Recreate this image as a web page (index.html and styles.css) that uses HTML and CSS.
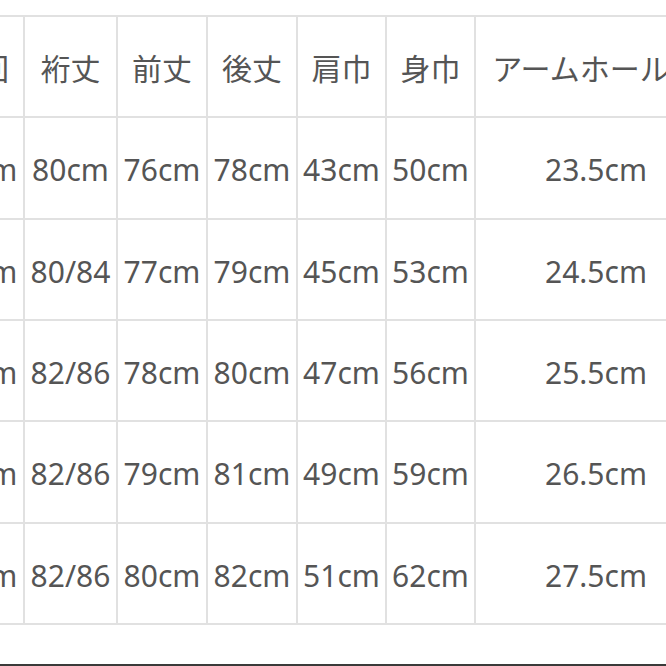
FILE: index.html
```html
<!DOCTYPE html>
<html lang="ja">
<head>
<meta charset="utf-8">
<title>サイズ表</title>
<link rel="stylesheet" href="styles.css">
</head>
<body>
<div class="page">
  <table class="size-table">
    <colgroup>
      <col class="c-chest">
      <col class="c-sleeve">
      <col class="c-front">
      <col class="c-back">
      <col class="c-shoulder">
      <col class="c-body">
      <col class="c-arm">
    </colgroup>
    <thead>
      <tr>
        <th>胸回</th>
        <th>裄丈</th>
        <th>前丈</th>
        <th>後丈</th>
        <th>肩巾</th>
        <th>身巾</th>
        <th>アームホール周</th>
      </tr>
    </thead>
    <tbody>
      <tr><td>90cm</td><td>80cm</td><td>76cm</td><td>78cm</td><td>43cm</td><td>50cm</td><td>23.5cm</td></tr>
      <tr><td>94cm</td><td>80/84</td><td>77cm</td><td>79cm</td><td>45cm</td><td>53cm</td><td>24.5cm</td></tr>
      <tr><td>98cm</td><td>82/86</td><td>78cm</td><td>80cm</td><td>47cm</td><td>56cm</td><td>25.5cm</td></tr>
      <tr><td>92cm</td><td>82/86</td><td>79cm</td><td>81cm</td><td>49cm</td><td>59cm</td><td>26.5cm</td></tr>
      <tr><td>96cm</td><td>82/86</td><td>80cm</td><td>82cm</td><td>51cm</td><td>62cm</td><td>27.5cm</td></tr>
    </tbody>
  </table>
  <div class="bottom-bar"></div>
</div>
</body>
</html>
```

FILE: styles.css
```css
html, body {
  margin: 0;
  padding: 0;
  background: #ffffff;
  overflow: hidden;
}

.page {
  width: 666px;
  height: 666px;
  display: flex;
  flex-direction: column;
  padding-top: 15px;
  box-sizing: border-box;
  overflow: hidden;
}

.size-table {
  border-collapse: collapse;
  table-layout: fixed;
  width: 783px;
  margin-left: -67px;
  font-family: "Noto Sans", "Noto Sans CJK JP", sans-serif;
  font-size: 30px;
  color: #555555;
  flex: none;
}

.c-chest { width: 90px; }
.c-sleeve { width: 93px; }
.c-front { width: 90px; }
.c-back { width: 90px; }
.c-shoulder { width: 89px; }
.c-body { width: 89px; }
.c-arm { width: 242px; }

.size-table th,
.size-table td {
  border: 2px solid #e1e1e1;
  height: 99.33px;
  padding: 0;
  text-align: center;
  vertical-align: middle;
  font-weight: 400;
  white-space: nowrap;
  overflow: hidden;
}

.size-table td {
  height: 95.33px;
  padding-top: 4px;
}

.bottom-bar {
  margin-top: auto;
  height: 2px;
  background: #3a3a3a;
  flex: none;
}
```
